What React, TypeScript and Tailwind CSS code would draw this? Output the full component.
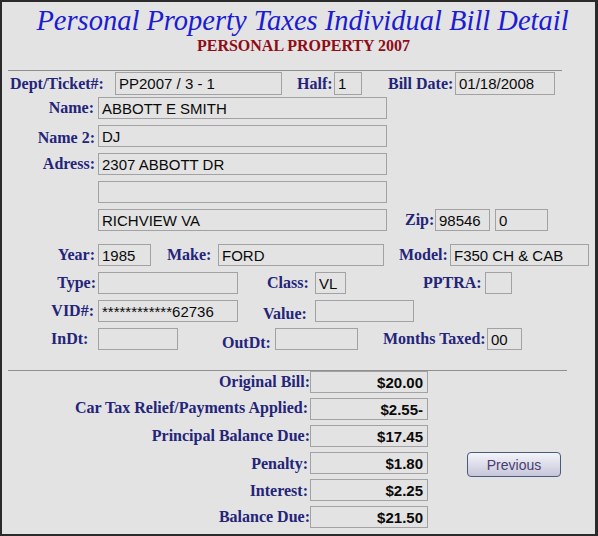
import React from "react";

const serif = { fontFamily: '"Liberation Serif", "Times New Roman", serif' };

function Box({
  w,
  text = "",
  right = false,
  bold = false,
  h = "h-[22px]",
}: {
  w: string;
  text?: string;
  right?: boolean;
  bold?: boolean;
  h?: string;
}) {
  return (
    <div
      className={`${w} ${h} shrink-0 border border-[#a2a2a2] flex items-center ${
        right ? "justify-end pr-[4px]" : "pl-[3px]"
      } ${bold ? "font-bold text-[15px]" : "text-[15px]"} text-[#0a0a0a] whitespace-nowrap overflow-hidden leading-none`}
      style={{ fontFamily: '"Liberation Sans", Arial, sans-serif' }}
    >
      {text}
    </div>
  );
}

function L({
  children,
  cls = "",
}: {
  children: React.ReactNode;
  cls?: string;
}) {
  return (
    <div
      className={`shrink-0 whitespace-nowrap font-bold text-[16px] leading-none text-[#24247a] ${cls}`}
      style={serif}
    >
      {children}
    </div>
  );
}

function Row({
  children,
  cls = "",
}: {
  children: React.ReactNode;
  cls?: string;
}) {
  return <div className={`flex items-center h-[22px] ${cls}`}>{children}</div>;
}

export default function App() {
  return (
    <div className="w-[598px] h-[536px] bg-[#2a2a2a] pt-[2px] pl-[2px] pr-[3px] pb-[2px]">
      <div className="w-full h-full bg-[#e3e3e3] flex flex-col overflow-hidden">
        <div
          className="mt-[3px] h-[32px] leading-[32px] text-center italic text-[28.5px] text-[#1c1cd0] whitespace-nowrap pl-[8px]"
          style={serif}
        >
          Personal Property Taxes Individual Bill Detail
        </div>
        <div
          className="h-[18px] leading-[18px] text-center font-bold text-[16px] text-[#8e0c16] whitespace-nowrap pl-[10px]"
          style={serif}
        >
          PERSONAL PROPERTY 2007
        </div>
        <div className="mt-[15px] ml-[6px] w-[554px] h-px bg-[#8e8e8e]" />

        {/* Row 1 */}
        <Row cls="mt-[1px] h-[23px]">
          <L cls="ml-[8px] w-[105px]">Dept/Ticket#:</L>
          <Box w="w-[167px]" h="h-[23px]" text="PP2007 / 3 - 1" />
          <L cls="ml-[15px] w-[37px]">Half:</L>
          <Box w="w-[28px]" h="h-[23px]" text="1" />
          <L cls="ml-[26px] w-[67px]">Bill Date:</L>
          <Box w="w-[100px]" h="h-[23px]" text="01/18/2008" />
        </Row>

        <Row cls="mt-[2px]">
          <L cls="w-[96px] text-right pr-[4px]">Name:</L>
          <Box w="w-[289px]" text="ABBOTT E SMITH" />
        </Row>
        <Row cls="mt-[6px]">
          <L cls="w-[96px] text-right pr-[3px] mt-[4px]">Name 2:</L>
          <Box w="w-[289px]" text="DJ" />
        </Row>
        <Row cls="mt-[6px]">
          <L cls="w-[96px] text-right pr-[3px]">Adress:</L>
          <Box w="w-[289px]" text="2307 ABBOTT DR" />
        </Row>
        <Row cls="mt-[6px]">
          <div className="w-[96px] shrink-0" />
          <Box w="w-[289px]" />
        </Row>
        <Row cls="mt-[6px]">
          <div className="w-[96px] shrink-0" />
          <Box w="w-[289px]" text="RICHVIEW VA" />
          <L cls="ml-[18px] w-[30px]">Zip:</L>
          <Box w="w-[55px]" text="98546" />
          <div className="w-[5px] shrink-0" />
          <Box w="w-[53px]" text="0" />
        </Row>

        {/* Vehicle */}
        <Row cls="mt-[13px]">
          <L cls="w-[96px] text-right pr-[3px]">Year:</L>
          <Box w="w-[53px]" text="1985" />
          <L cls="ml-[16px] w-[51px]">Make:</L>
          <Box w="w-[166px]" text="FORD" />
          <L cls="ml-[15px] w-[51px]">Model:</L>
          <Box w="w-[139px]" text="F350 CH & CAB" />
        </Row>
        <Row cls="mt-[6px]">
          <L cls="w-[96px] text-right pr-[2px]">Type:</L>
          <Box w="w-[140px]" />
          <L cls="ml-[29px] w-[48px]">Class:</L>
          <Box w="w-[31px]" text="VL" />
          <L cls="ml-[77px] w-[62px]">PPTRA:</L>
          <Box w="w-[27px]" />
        </Row>
        <Row cls="mt-[6px]">
          <L cls="w-[96px] text-right pr-[4px]">VID#:</L>
          <Box w="w-[140px]" text="************62736" />
          <L cls="ml-[25px] w-[52px] mt-[6px]">Value:</L>
          <Box w="w-[99px]" />
        </Row>
        <Row cls="mt-[6px]">
          <L cls="w-[96px] pl-[49px]">InDt:</L>
          <Box w="w-[80px]" />
          <L cls="ml-[44px] w-[53px] mt-[8px]">OutDt:</L>
          <Box w="w-[83px]" />
          <L cls="ml-[25px] w-[104px]">Months Taxed:</L>
          <Box w="w-[35px]" text="00" />
        </Row>

        <div className="mt-[20px] ml-[6px] w-[559px] h-px bg-[#8e8e8e]" />

        {/* Totals */}
        <Row>
          <L cls="w-[308px] text-right">Original Bill:</L>
          <Box w="w-[118px]" right bold text="$20.00" />
        </Row>
        <Row cls="mt-[5px]">
          <L cls="w-[308px] text-right pr-[2px] -mt-[2px]">Car Tax Relief/Payments Applied:</L>
          <Box w="w-[118px]" right bold text="$2.55-" />
        </Row>
        <Row cls="mt-[5px]">
          <L cls="w-[308px] text-right">Principal Balance Due:</L>
          <Box w="w-[118px]" right bold text="$17.45" />
        </Row>
        <Row cls="mt-[5px] items-start">
          <L cls="w-[308px] text-right pr-[2px] mt-[4px]">Penalty:</L>
          <Box w="w-[118px]" right bold text="$1.80" />
          <button
            className="ml-[39px] w-[94px] h-[25px] shrink-0 rounded-[4px] border border-[#4b5b7c] bg-gradient-to-b from-[#f4f4fa] to-[#c6c6da] text-[14px] text-[#4a3d6e] leading-none"
            style={{ fontFamily: '"Liberation Sans", Arial, sans-serif' }}
          >
            Previous
          </button>
        </Row>
        <Row cls="mt-[5px]">
          <L cls="w-[308px] text-right pr-[2px] mt-[2px]">Interest:</L>
          <Box w="w-[118px]" right bold text="$2.25" />
        </Row>
        <Row cls="mt-[5px]">
          <L cls="w-[308px] text-right">Balance Due:</L>
          <Box w="w-[118px]" right bold text="$21.50" />
        </Row>
      </div>
    </div>
  );
}
